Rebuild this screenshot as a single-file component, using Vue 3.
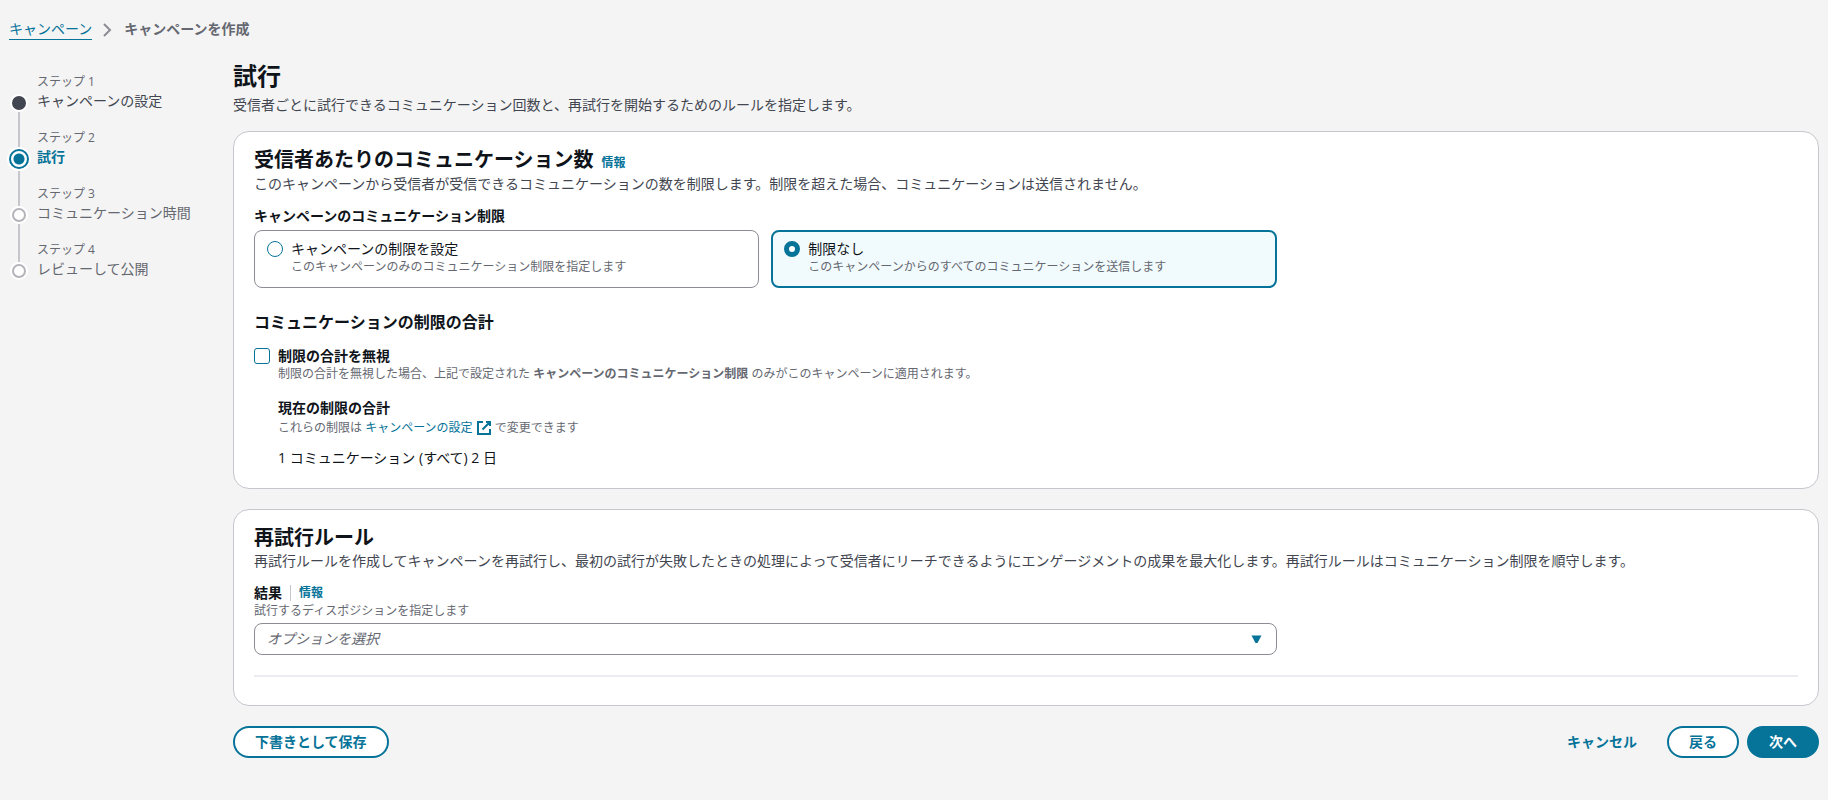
<template>
  <div class="page">
    <nav class="crumbs" aria-label="パンくず">
      <a href="#">キャンペーン</a>
      <svg class="chev" viewBox="0 0 16 16"><path d="M4 2 10 8 4 14" /></svg>
      <span>キャンペーンを作成</span>
    </nav>

    <div class="layout">
      <ol class="steps">
        <li v-for="(s, i) in steps" :key="s.name" :class="s.state">
          <div class="no">ステップ {{ i + 1 }}</div>
          <div class="rail"><span class="dot"></span><i class="line"></i></div>
          <div class="name">{{ s.name }}</div>
        </li>
      </ol>

      <main class="main">
        <header class="page-head">
          <h1>試行</h1>
          <p>受信者ごとに試行できるコミュニケーション回数と、再試行を開始するためのルールを指定します。</p>
        </header>

        <section class="card">
          <div class="card-h">
            <h2>受信者あたりのコミュニケーション数</h2>
            <a href="#" class="info">情報</a>
          </div>
          <p class="card-desc">このキャンペーンから受信者が受信できるコミュニケーションの数を制限します。制限を超えた場合、コミュニケーションは送信されません。</p>

          <div class="grid">
            <div class="field" role="radiogroup" aria-labelledby="limit-label">
              <div id="limit-label" class="label">キャンペーンのコミュニケーション制限</div>
              <div class="tiles">
                <label v-for="o in options" :key="o.value" class="tile" :class="{ on: limit === o.value }">
                  <input v-model="limit" type="radio" name="limit" :value="o.value" />
                  <span>
                    <span class="tile-t">{{ o.title }}</span>
                    <span class="hint">{{ o.desc }}</span>
                  </span>
                </label>
              </div>
            </div>
          </div>

          <h3>コミュニケーションの制限の合計</h3>
          <div class="check">
            <input id="ignore" v-model="ignoreTotal" type="checkbox" />
            <div>
              <label for="ignore" class="label">制限の合計を無視</label>
              <div class="hint">制限の合計を無視した場合、上記で設定された <b>キャンペーンのコミュニケーション制限</b> のみがこのキャンペーンに適用されます。</div>
              <div class="total">
                <div class="label">現在の制限の合計</div>
                <div class="hint total-hint">
                  これらの制限は
                  <a href="#">キャンペーンの設定
                    <svg class="ext" viewBox="0 0 16 16"><path d="M7 2H2v12h12V9M10 2h4v4M6.5 9.5 14 2" /></svg></a>
                  で変更できます
                </div>
                <div class="value">1 コミュニケーション (すべて) 2 日</div>
              </div>
            </div>
          </div>
        </section>

        <section class="card rules">
          <div class="card-h"><h2>再試行ルール</h2></div>
          <p class="card-desc">再試行ルールを作成してキャンペーンを再試行し、最初の試行が失敗したときの処理によって受信者にリーチできるようにエンゲージメントの成果を最大化します。再試行ルールはコミュニケーション制限を順守します。</p>
          <div class="grid">
            <div class="field">
              <div class="label-row">
                <label for="result" class="label">結果</label>
                <a href="#" class="info sep">情報</a>
              </div>
              <div class="hint">試行するディスポジションを指定します</div>
              <div class="select">
                <select id="result" v-model="result">
                  <option value="">オプションを選択</option>
                </select>
                <svg viewBox="0 0 16 16"><path d="M2.5 4.5h10L8.5 12H6.5z" /></svg>
              </div>
            </div>
          </div>
          <hr />
        </section>

        <footer class="actions">
          <button type="button" class="btn">下書きとして保存</button>
          <div class="right">
            <button type="button" class="btn link">キャンセル</button>
            <button type="button" class="btn">戻る</button>
            <button type="button" class="btn primary">次へ</button>
          </div>
        </footer>
      </main>
    </div>
  </div>
</template>

<script setup>
import { ref } from 'vue'

const steps = [
  { name: 'キャンペーンの設定', state: 'done' },
  { name: '試行', state: 'active' },
  { name: 'コミュニケーション時間', state: 'todo' },
  { name: 'レビューして公開', state: 'todo' }
]

const options = [
  { value: 'set', title: 'キャンペーンの制限を設定', desc: 'このキャンペーンのみのコミュニケーション制限を指定します' },
  { value: 'none', title: '制限なし', desc: 'このキャンペーンからのすべてのコミュニケーションを送信します' }
]

const limit = ref('none')
const ignoreTotal = ref(false)
const result = ref('')
</script>

<style>
body{ margin:0; background:#f4f4f4; }
</style>

<style scoped>
.page{ padding:19px 9px 40px; font:14px/20px "Open Sans", "Noto Sans CJK JP", sans-serif; color:#0f141a; }
.page *{ box-sizing:border-box; }
h1, h2, h3, p{ margin:0; }
a{ color:#067399; text-decoration:none; }
input, select, button{ font:inherit; margin:0; }

.crumbs{ display:flex; align-items:flex-start; color:#656871; font-weight:700; }
.crumbs a{ font-weight:400; border-bottom:1px solid #067399; }
.chev{ width:16px; height:16px; margin:3px 8px 0; fill:none; stroke:#8c8c94; stroke-width:2; }

.layout{ display:flex; margin-top:21px; }
.steps{ flex:none; width:224px; margin:0; padding:10px 0 0; list-style:none; }
.steps li{ display:grid; grid-template-columns:20px 1fr; column-gap:8px; height:56px; grid-template-rows:20px 20px; color:#656871; }
.no{ grid-column:2; font-size:12px; line-height:22px; color:#656871; }
.rail{ grid-column:1; grid-row:2; height:56px; display:flex; flex-direction:column; align-items:center; padding-top:5px; }
.dot{ flex:none; width:14px; height:14px; border-radius:50%; border:2px solid #b4b4bb; background:#fff; box-shadow:0 0 0 2px #fff; }
.line{ width:2px; flex:1; margin:2px 0 -3px; background:#c6c6cd; }
.steps li:last-child .line{ display:none; }
.done .name{ color:#424650; }
.done .dot{ background:#424650; border-color:#424650; }
.active .name{ color:#067399; font-weight:700; }
.active .rail{ padding-top:2px; }
.active .dot{ width:20px; height:20px; border-color:#067399; background:radial-gradient(circle, #067399 5px, #fff 6px); }

.main{ flex:1; min-width:0; }
.page-head{ margin-bottom:16px; }
.page-head h1{ font-size:24px; line-height:30px; }
.page-head p{ color:#424650; margin-top:4px; }

.card{ background:#fff; border:1px solid #c6c6cd; border-radius:16px; padding:16px 20px 20px; }
.card-h{ display:flex; align-items:baseline; gap:8px; }
h2{ font-size:20px; line-height:24px; }
.card-desc{ color:#424650; margin-top:1px; }
.info{ font-size:12px; font-weight:700; }
.sep{ border-left:1px solid #c6c6cd; padding-left:8px; line-height:16px; }
.grid{ display:grid; grid-template-columns:repeat(3, minmax(0, 1fr)); gap:20px; margin-top:12px; }
.field{ grid-column:span 2; }
.label{ font-weight:700; }
.label-row{ display:flex; align-items:center; gap:8px; }
.hint{ display:block; font-size:12px; line-height:16px; color:#656871; }

.tiles{ display:grid; grid-template-columns:1fr 1fr; gap:12px; margin-top:4px; }
.tile{ display:flex; gap:8px; min-height:58px; padding:8px 12px; border:1px solid #8c8c94; border-radius:8px; }
.tile.on{ border:2px solid #067399; background:#f1fafc; padding:7px 11px; }
.tile-t{ display:block; }
input[type=radio], input[type=checkbox]{ appearance:none; flex:none; width:16px; height:16px; margin-top:2px; border:1px solid #067399; background:#fff; }
input[type=radio]{ border-radius:50%; }
input[type=radio]:checked{ border-width:5px; }
input[type=checkbox]{ border-radius:3px; }
input[type=checkbox]:checked{ background:#067399; }

h3{ font-size:16px; line-height:20px; margin-top:24px; }
.check{ display:flex; gap:8px; margin-top:14px; }
.check label{ display:block; }
.total{ margin-top:16px; }
.total-hint{ line-height:20px; }
.ext{ width:16px; height:16px; vertical-align:text-bottom; fill:none; stroke:#067399; stroke-width:2; }
.value{ margin-top:10px; }

.rules{ margin-top:20px; }
.select{ position:relative; margin-top:4px; }
.select select{ appearance:none; display:block; width:100%; height:32px; padding:0 36px 0 12px; border:1px solid #8c8c94; border-radius:8px; background:#fff; color:#656871; font-style:italic; }
.select svg{ position:absolute; right:12px; top:8px; width:16px; height:16px; fill:#067399; pointer-events:none; }
hr{ border:0; height:2px; margin:20px 0 8px; background:#ebebf0; }

.actions{ display:flex; justify-content:space-between; margin-top:20px; }
.right{ display:flex; gap:8px; }
.btn{ height:32px; padding:0 20px; border:2px solid #067399; border-radius:20px; background:#fff; color:#067399; font-weight:700; cursor:pointer; }
.btn.link{ border-color:transparent; background:transparent; }
.btn.primary{ background:#067399; color:#fff; }
</style>
